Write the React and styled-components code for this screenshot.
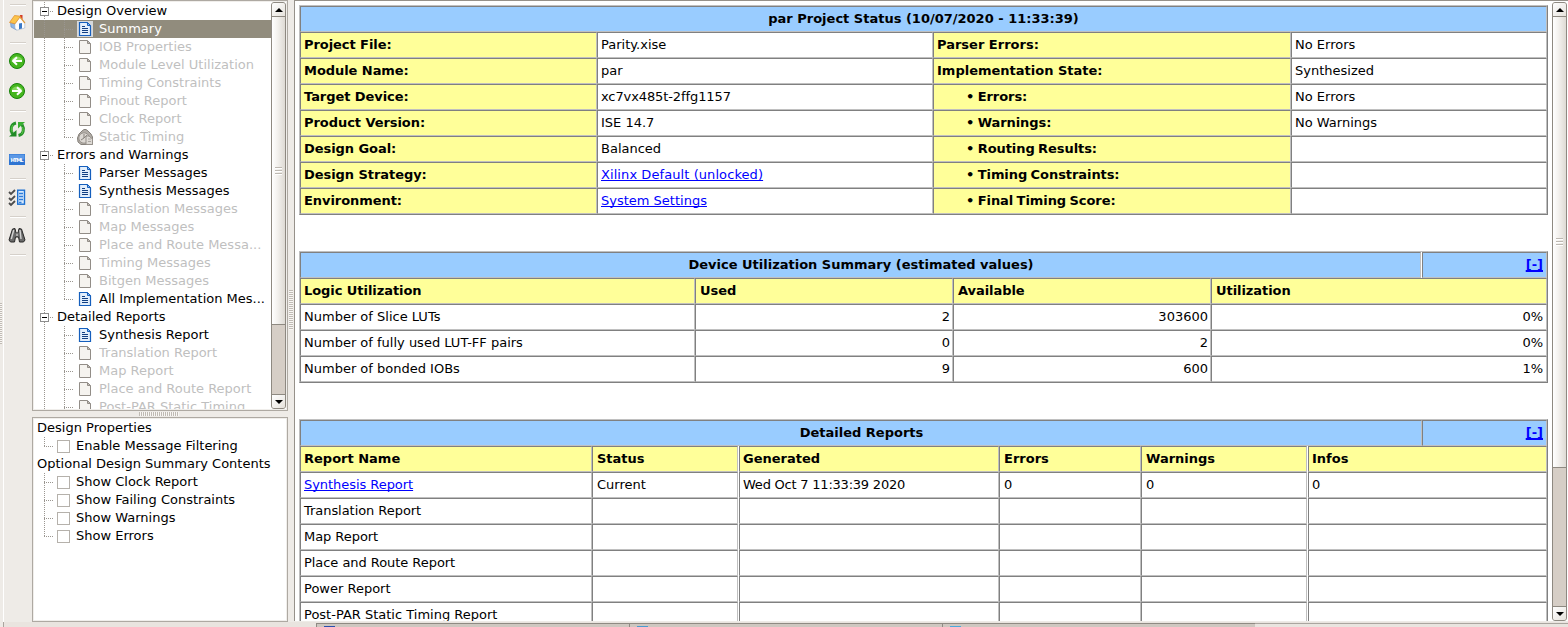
import React from "react";
import styled, { createGlobalStyle, css } from "styled-components";

const Global = createGlobalStyle`
  * { box-sizing: border-box; }
  html, body { margin: 0; padding: 0; background: #eeebe7; overflow: hidden; }
  body { font: 13px/18px "DejaVu Sans", sans-serif; color: #000; }
`;

const dark = "#808080";
const light = "#c0c0c0";
const dotsV = "repeating-linear-gradient(180deg, #9a9690 0 1px, transparent 1px 2px)";
const dotsH = "repeating-linear-gradient(90deg, #9a9690 0 1px, transparent 1px 2px)";

const Window = styled.div`
  width: 1568px;
  height: 627px;
  display: flex;
  flex-direction: column;
  overflow: hidden;
  background: #eeebe7;
`;
const Main = styled.div`
  display: flex;
  height: 622px;
`;
const EdgeStrip = styled.div`
  width: 4px;
  border-right: 1px solid #fff;
  padding-top: 303px;
`;
const Grip = styled.div`
  width: ${(p) => p.$w}px;
  height: ${(p) => p.$h}px;
  background: repeating-linear-gradient(${(p) => (p.$side ? "90deg" : "180deg")}, #c0bbb4 0 1px, #f8f6f4 1px 2px);
`;
const Toolbar = styled.div`
  width: 28px;
  padding: 4px 0 0 5px;
  display: flex;
  flex-direction: column;
`;
const Divider = styled.div`
  width: 16px;
  height: 2px;
  flex: none;
  margin: ${(p) => p.$top}px 0 0 1px;
  background: #fff;
  border-top: 1px solid #d5d0ca;
`;
const Tool = styled.svg`
  display: block;
  width: 17px;
  height: 17px;
  flex: none;
  margin-top: ${(p) => p.$top}px;
  overflow: visible;
`;
const Side = styled.div`
  width: 256px;
  display: flex;
  flex-direction: column;
`;
const Frame = styled.div`
  height: ${(p) => p.$h}px;
  flex: none;
  display: flex;
  border: 1px solid #aea9a2;
  box-shadow: inset 0 0 0 1px #f0eeeb;
  background: #fff;
  padding: 1px;
`;
const Tree = styled.div`
  flex: 1;
  min-width: 0;
  overflow: hidden;
`;
const SideSplit = styled.div`
  height: 6px;
  flex: none;
  padding: 1px 0 0 107px;
`;
const ColumnSplit = styled.div`
  width: 6px;
  padding: 290px 0 0 1px;
`;

const TreeRow = styled.div`
  height: 18px;
  display: flex;
  white-space: nowrap;
  color: ${(p) => (p.$selected ? "#fff" : p.$off ? "#bfbfbf" : "#000")};
  background: ${(p) => (p.$selected ? "#918c7d" : "transparent")};
`;
const Guide = styled.div`
  width: 20px;
  flex: none;
  background: ${(p) => (p.$line ? `${dotsV} 10px 0 / 1px ${p.$last ? "10px" : "18px"} no-repeat` : "none")}${(p) =>
    p.$branch ? `, ${dotsH} 10px 9px / 9px 1px no-repeat` : ""};
`;
const Toggle = styled.div`
  width: 23px;
  flex: none;
  padding: 5px 0 0 6px;
  background: ${dotsH} 16px 9px / 3px 1px no-repeat, ${dotsV} 10px 0 / 1px 18px no-repeat;
`;
const Minus = styled.div`
  width: 9px;
  height: 9px;
  border: 1px solid #8d8d8d;
  background: linear-gradient(#000, #000) 1px 3px / 5px 1px no-repeat #fff;
`;
const FileIcon = styled.svg`
  width: 16px;
  height: 16px;
  flex: none;
  margin: 1px 6px 0 3px;
  background: ${(p) => (p.$on ? "#d6d9dc" : "transparent")};
`;
const Label = styled.span`
  overflow: hidden;
  text-overflow: ellipsis;
  padding-right: 3px;
`;
const Options = styled.div`
  width: 100%;
`;
const OptionHead = styled.div`
  height: 18px;
  padding-left: 3px;
`;
const OptionRow = styled.div`
  height: 18px;
  display: flex;
`;
const CheckBox = styled.div`
  width: 13px;
  height: 13px;
  margin: 3px 6px 0 3px;
  border: 1px solid #b5b1ab;
  background: #fff;
`;

const Scroll = styled.div`
  width: 15px;
  flex: none;
  display: flex;
  flex-direction: column;
  background: #d6cec6;
  border: 1px solid #8e8981;
  border-radius: 3px;
  overflow: hidden;
`;
const ScrollButton = styled.div`
  height: 14px;
  flex: none;
  display: flex;
  align-items: center;
  justify-content: center;
  background: linear-gradient(135deg, #fff, #e6e2dc);
  border-${(p) => (p.$down ? "top" : "bottom")}: 1px solid #8e8981;
  &::before {
    content: "";
    border: 4px solid transparent;
    border-top: ${(p) => (p.$down ? "4px solid #000" : "0")};
    border-bottom: ${(p) => (p.$down ? "0" : "4px solid #000")};
  }
`;
const Thumb = styled.div`
  height: ${(p) => p.$h}px;
  flex: none;
  display: flex;
  align-items: center;
  justify-content: center;
  background: linear-gradient(90deg, #fff, #f4f2ef 40%, #dedad4);
  border-bottom: 1px solid #8e8981;
  &::before {
    content: "";
    width: 7px;
    height: 8px;
    background: repeating-linear-gradient(180deg, #bdb8b1 0 1px, #fff 1px 2px, transparent 2px 3px);
  }
`;
const Spacer = styled.div`
  flex: 1;
`;

const Report = styled.div`
  width: 1274px;
  height: 621px;
  flex: none;
  display: flex;
  background: #fff;
  border-left: 1px solid #96918a;
  border-top: 1px solid #96918a;
  padding: 1px 1px 0 4px;
  overflow: hidden;
`;
const Page = styled.div`
  width: 1253px;
  flex: none;
  height: 619px;
  padding-top: 3px;
  overflow: hidden;
`;
const Table = styled.div`
  width: 1249px;
  border: 1px solid ${light};
  border-right-color: ${dark};
  border-bottom-color: ${dark};
  margin-bottom: 36px;
`;
const Row = styled.div`
  display: grid;
  grid-template-columns: ${(p) => p.$cols};
  height: 26px;
`;
const Cell = styled.div`
  border: 1px solid;
  border-color: ${dark} ${light} ${light} ${dark};
  padding: 0 3px;
  line-height: 24px;
  white-space: nowrap;
  ${(p) => p.$gap && css`margin-right: 1px;`}
  ${(p) => p.$tone === "title" && css`background: #99ccff; font-weight: bold; text-align: center;`}
  ${(p) => p.$tone === "head" && css`background: #ffff99; font-weight: bold;`}
  ${(p) => p.$right && css`text-align: right;`}
  ${(p) => p.$nudge && (p.$right ? css`padding-right: 2px;` : css`padding-left: 4px;`)}
  ${(p) => p.$tight && css`letter-spacing: ${p.$tight}px;`}
`;
const Bullet = styled.span`
  padding-left: 29px;
  word-spacing: -1px;
`;
const Link = styled.a`
  color: #0000ff;
  text-decoration: underline;
  text-decoration-skip-ink: none;
  text-decoration-thickness: ${(p) => (p.$bold ? "2px" : "1px")};
`;
const ScrollWrap = styled.div`
  display: flex;
  height: 619px;
`;
const Tabs = styled.div`
  height: 5px;
  padding: 1px 0 0 312px;
  margin-left: 3px;
  display: flex;
  border-left: 1px solid #aaa59f;
  background: linear-gradient(#aaa59f, #aaa59f) 312px 1px / 100% 1px no-repeat, #e9e4df;
`;
const Tab = styled.div`
  width: 313px;
  height: 4px;
  background: #cec7c0;
  border: 1px solid #8f8a83;
  border-width: 1px 0 0 1px;
  padding-left: 7px;
  &::before {
    content: "";
    display: block;
    width: 11px;
    height: 2px;
    margin-top: 2px;
    background: ${(p) => p.$c};
  }
`;

function DocIcon({ active, selected }) {
  return (
    <FileIcon viewBox="0 0 16 16" $on={selected}>
      <path
        d="M2.5 1.5H10L13.5 5V14.5H2.5Z"
        fill={active ? "#e3effc" : "#f5f3ef"}
        stroke={active ? "#155fbd" : "#928d87"}
        strokeWidth={active ? 1.2 : 1}
      />
      <path d="M10.5 1.5V4.5H13.5Z" fill={active ? "#8dbcf0" : "#c5c0ba"} stroke={active ? "#155fbd" : "#928d87"} />
      {active && <path d="M5 5.5H8M5 7.5H11M5 9.5H11M5 11.5H11" stroke="#123f82" strokeWidth="1" />}
    </FileIcon>
  );
}

function ClockIcon() {
  return (
    <FileIcon viewBox="0 0 16 16">
      <path d="M5 2L7 .5H9L11 2L14 5L15.5 8V15.5H4L1 13L0.5 9L2 5Z" fill="#b3aea8" stroke="#85807a" />
      <circle cx="7" cy="9" r="5.2" fill="#dcd8d3" stroke="#97928c" />
      <path d="M7 9L10 6M7 5V9M4 11L7 9M9 11H15M10 13.5H14" stroke="#87827c" fill="none" />
      <path d="M9 7H12L15.5 10V15.5H9Z" fill="#ddd9d4" stroke="#96918b" />
      <path d="M11 10H14M11 12.5H14" stroke="#aaa59f" />
    </FileIcon>
  );
}

const groups = [
  {
    name: "Design Overview",
    items: [
      ["Summary", 2], ["IOB Properties", 0], ["Module Level Utilization", 0], ["Timing Constraints", 0],
      ["Pinout Report", 0], ["Clock Report", 0], ["Static Timing", 3],
    ],
  },
  {
    name: "Errors and Warnings",
    items: [
      ["Parser Messages", 1], ["Synthesis Messages", 1], ["Translation Messages", 0], ["Map Messages", 0],
      ["Place and Route Messa...", 0], ["Timing Messages", 0], ["Bitgen Messages", 0],
      ["All Implementation Mes...", 1],
    ],
  },
  {
    name: "Detailed Reports",
    items: [
      ["Synthesis Report", 1], ["Translation Report", 0], ["Map Report", 0], ["Place and Route Report", 0],
      ["Post-PAR Static Timing", 0],
    ],
  },
];

const contents = ["Show Clock Report", "Show Failing Constraints", "Show Warnings", "Show Errors"];

const status = [
  ["Project File:", "Parity.xise", "Parser Errors:", "No Errors"],
  ["Module Name:", "par", "Implementation State:", "Synthesized"],
  ["Target Device:", "xc7vx485t-2ffg1157", "• Errors:", "No Errors"],
  ["Product Version:", "ISE 14.7", "• Warnings:", "No Warnings"],
  ["Design Goal:", "Balanced", "• Routing Results:", ""],
  ["Design Strategy:", "Xilinx Default (unlocked)", "• Timing Constraints:", ""],
  ["Environment:", "System Settings", "• Final Timing Score:", ""],
];

const usage = [
  ["Number of Slice LUTs", "2", "303600", "0%"],
  ["Number of fully used LUT-FF pairs", "0", "2", "0%"],
  ["Number of bonded IOBs", "9", "600", "1%"],
];

const reports = [
  ["Synthesis Report", "Current", "Wed Oct 7 11:33:39 2020", "0", "0", "0"],
  ["Translation Report", "", "", "", "", ""],
  ["Map Report", "", "", "", "", ""],
  ["Place and Route Report", "", "", "", "", ""],
  ["Power Report", "", "", "", "", ""],
  ["Post-PAR Static Timing Report", "", "", "", "", ""],
];

const statusCols = "297px 336px 358px 256px";
const usageCols = "395px 258px 258px 336px";
const reportCols = "292px 147px 260px 142px 167px 239px";
const reportNudge = [false, true, false, true, true, false];

function ArrowTool({ top, back }) {
  return (
    <Tool $top={top} viewBox="0 0 17 17">
      <circle cx="8" cy="8" r="7.5" fill="#45b51e" stroke="#16830a" />
      <path d="M2.5 7A6 6 0 0 1 13.5 7Z" fill="#82d95c" />
      <path
        d={back ? "M13 8H4.5M8 4.2L4 8L8 11.8" : "M3 8H11.5M8 4.2L12 8L8 11.8"}
        stroke="#fff"
        strokeWidth="2"
        fill="none"
      />
    </Tool>
  );
}

function ToolStrip() {
  return (
    <Toolbar>
      <Divider $top={0} />
      <Tool $top={8} viewBox="0 0 17 17">
        <path d="M11 1H13.5V6L11 4Z" fill="#d43a2a" />
        <path d="M1.5 8L6 10L7.5 16L2 13Z" fill="#8fb6e6" stroke="#5f8ac4" strokeWidth=".6" />
        <path d="M5.8 10L11 3L15.8 9V14L8 16.2L6 14.5Z" fill="#fdfdfe" stroke="#9fb0c6" strokeWidth=".6" />
        <path d="M.5 8.5L5.5 1.5L11.5 2.2L6 9.8Z" fill="#fbc44c" stroke="#e08a25" strokeWidth=".7" />
        <path d="M11 3L16 9.2" stroke="#e39a35" strokeWidth="1.2" />
        <path d="M10 9.5L13 9V14.5L10 15.3Z" fill="#3a78c6" />
      </Tool>
      <Divider $top={11} />
      <ArrowTool top={9} back />
      <ArrowTool top={13} />
      <Divider $top={10} />
      <Tool $top={9} viewBox="0 0 17 17">
        <path d="M7 2C2 3 .8 8.5 3.5 13" stroke="#27932b" strokeWidth="3" fill="none" />
        <path d="M0 15.5H7.5V9Z" fill="#1f8a25" />
        <path d="M9.5 14.5C14.5 13.5 15.7 8 13 3.5" stroke="#27932b" strokeWidth="3" fill="none" />
        <path d="M16 1H9V7.5Z" fill="#39ae32" />
        <path d="M4 4C2.3 6 2.3 8.5 3.3 11M12.5 13C14.3 11 14.5 8 13.5 6" stroke="#63cb4a" fill="none" />
      </Tool>
      <Tool $top={14} viewBox="0 0 17 17">
        <rect y="2" width="16" height="11" fill="#2e74d2" />
        <rect x=".5" y="2.5" width="15" height="5" fill="#5b98e6" />
        <text x="8" y="9.8" fill="#fff" fontSize="5.2" fontWeight="bold" textAnchor="middle" textLength="13">HTML</text>
      </Tool>
      <Divider $top={9} />
      <Tool $top={9} viewBox="0 0 17 17">
        <path d="M0 3L2 5L6 1M0 9L2 11L6 7M0 14L2 16L6 12" stroke="#4c4c4c" strokeWidth="1.8" fill="none" />
        <rect x="8.7" y="1.2" width="6.8" height="14" fill="#d9eafd" stroke="#1c70d2" strokeWidth="1.4" />
        <path d="M10 4.5H14M10 7.5H14M10 10.5H14M10 13.5H12.5" stroke="#2e7dda" strokeWidth="1.3" />
      </Tool>
      <Divider $top={10} />
      <Tool $top={9} viewBox="0 0 17 17">
        <path d="M3.5 2L6 1.5L7 6H9L10 1.5L12.5 2L16 13L14.5 15H10.5L9.5 10H6.5L5.5 15H1.5L0 13Z" fill="#6a6a6a" stroke="#292929" />
        <path d="M4.7 3L2.3 12M11 3L12 12" stroke="#d2d2d2" strokeWidth="1.4" />
        <path d="M7 6.5H9V9H7Z" fill="#aaa" />
      </Tool>
      <Divider $top={10} />
    </Toolbar>
  );
}

export default function App() {
  return (
    <>
      <Global />
      <Window>
        <Main>
          <EdgeStrip><Grip $w={2} $h={41} /></EdgeStrip>
          <ToolStrip />
          <Side>
            <Frame $h={411}>
              <Tree>
                {groups.map((g, gi) => (
                  <React.Fragment key={g.name}>
                    <TreeRow>
                      <Toggle><Minus /></Toggle>
                      <Label>{g.name}</Label>
                    </TreeRow>
                    {g.items.map(([name, kind], i) => (
                      <TreeRow key={name} $selected={kind === 2} $off={kind === 0 || kind === 3}>
                        <Guide $line />
                        <Guide $line $branch $last={gi < 2 && i === g.items.length - 1} />
                        {kind === 3 ? <ClockIcon /> : <DocIcon active={kind > 0} selected={kind === 2} />}
                        <Label>{name}</Label>
                      </TreeRow>
                    ))}
                  </React.Fragment>
                ))}
              </Tree>
              <Scroll>
                <ScrollButton />
                <Thumb $h={308} />
                <Spacer />
                <ScrollButton $down />
              </Scroll>
            </Frame>
            <SideSplit><Grip $w={40} $h={4} $side /></SideSplit>
            <Frame $h={205}>
              <Options>
                <OptionHead>Design Properties</OptionHead>
                <OptionRow>
                  <Guide $line $branch $last />
                  <CheckBox />
                  <Label>Enable Message Filtering</Label>
                </OptionRow>
                <OptionHead>Optional Design Summary Contents</OptionHead>
                {contents.map((c, i) => (
                  <OptionRow key={c}>
                    <Guide $line $branch $last={i === contents.length - 1} />
                    <CheckBox />
                    <Label>{c}</Label>
                  </OptionRow>
                ))}
              </Options>
            </Frame>
          </Side>
          <ColumnSplit><Grip $w={4} $h={40} /></ColumnSplit>
          <Report>
            <Page>
              <Table>
                <Row $cols="1247px"><Cell $tone="title">par Project Status (10/07/2020 - 11:33:39)</Cell></Row>
                {status.map(([a, b, c, d], i) => (
                  <Row key={a} $cols={statusCols}>
                    <Cell $tone="head" $tight={-0.06}>{a}</Cell>
                    <Cell $tight={i === 2 ? -0.1 : i === 5 ? 0.08 : 0}>{i > 4 ? <Link>{b}</Link> : b}</Cell>
                    <Cell $tone="head" $tight={i > 1 ? -0.07 : 0}>{i > 1 ? <Bullet>{c}</Bullet> : c}</Cell>
                    <Cell>{d}</Cell>
                  </Row>
                ))}
              </Table>
              <Table>
                <Row $cols="1122px 125px">
                  <Cell $tone="title" $gap $nudge>Device Utilization Summary (estimated values)</Cell>
                  <Cell $tone="title" $right><Link $bold>[-]</Link></Cell>
                </Row>
                <Row $cols={usageCols}>
                  {["Logic Utilization", "Used", "Available", "Utilization"].map((h, i) => (
                    <Cell key={h} $tone="head" $nudge={i > 0} $tight={-0.06}>{h}</Cell>
                  ))}
                </Row>
                {usage.map((r) => (
                  <Row key={r[0]} $cols={usageCols}>
                    {r.map((v, i) => <Cell key={i} $right={i > 0} $nudge={i === 1 || i === 2}>{v}</Cell>)}
                  </Row>
                ))}
              </Table>
              <Table>
                <Row $cols="1122px 125px">
                  <Cell $tone="title" $nudge>Detailed Reports</Cell>
                  <Cell $tone="title" $right><Link $bold>[-]</Link></Cell>
                </Row>
                <Row $cols={reportCols}>
                  {["Report Name", "Status", "Generated", "Errors", "Warnings", "Infos"].map((h, i) => (
                    <Cell key={h} $tone="head" $gap={i === 1 || i === 4} $nudge={reportNudge[i]}>{h}</Cell>
                  ))}
                </Row>
                {reports.map((r, ri) => (
                  <Row key={r[0]} $cols={reportCols}>
                    {r.map((v, i) => (
                      <Cell key={i} $gap={i === 1 || i === 4} $nudge={reportNudge[i]} $tight={i === 2 ? -0.22 : i === 0 && ri < 4 ? -0.05 : 0}>
                        {ri === 0 && i === 0 ? <Link>{v}</Link> : v}
                      </Cell>
                    ))}
                  </Row>
                ))}
              </Table>
            </Page>
            <ScrollWrap>
              <Scroll>
                <ScrollButton />
                <Thumb $h={451} />
                <Spacer />
                <ScrollButton $down />
              </Scroll>
            </ScrollWrap>
          </Report>
        </Main>
        <Tabs>
          <Tab $c="#2a4fae" />
          <Tab $c="#4a9bd0" />
          <Tab $c="#4aa9dc" />
        </Tabs>
      </Window>
    </>
  );
}
